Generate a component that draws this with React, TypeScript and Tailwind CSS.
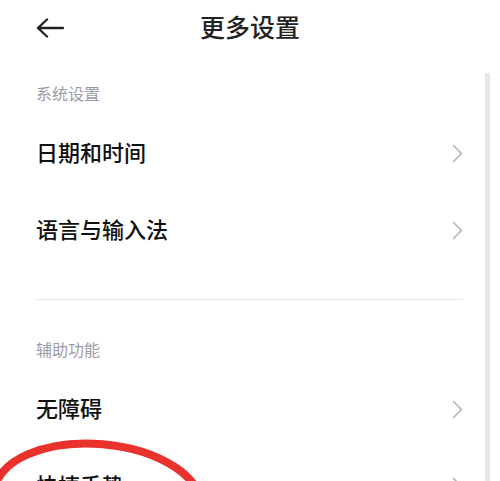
const font = { fontFamily: '"Noto Sans CJK SC", "Noto Sans", sans-serif' };

function BackArrow() {
  return (
    <svg width="28" height="20" viewBox="0 0 28 20" fill="none">
      <path d="M2 10H27M11 1.5L2 10L11 18.5" stroke="#222222" strokeWidth="2.4" strokeLinecap="round" strokeLinejoin="round" />
    </svg>
  );
}

function Chevron() {
  return (
    <svg width="11" height="19" viewBox="0 0 11 19" fill="none">
      <path d="M1.5 1.5L9.5 9.5L1.5 17.5" stroke="#b4b4b8" strokeWidth="1.6" strokeLinecap="round" strokeLinejoin="round" />
    </svg>
  );
}

function SectionTitle({ label }: { label: string }) {
  return <div className="flex h-[40px] items-center pb-[4px] text-[16px] text-[#9b9ba6]">{label}</div>;
}

function Row({ label }: { label: string }) {
  return (
    <div className="flex h-[77px] items-center justify-between">
      <span className="pb-[5px] text-[22px] font-medium text-[#111111]">{label}</span>
      <Chevron />
    </div>
  );
}

export default function App() {
  return (
    <div className="relative h-[481px] w-[500px] overflow-hidden bg-white" style={font}>
      <header className="relative flex h-[56px] items-center px-[36px]">
        <BackArrow />
        <h1 className="absolute left-0 right-0 pb-[2px] text-center text-[25px] font-medium text-[#222222]">更多设置</h1>
      </header>

      <div className="pl-[36px] pr-[37px]">
        <div className="mt-[19px]">
          <SectionTitle label="系统设置" />
          <Row label="日期和时间" />
          <Row label="语言与输入法" />
        </div>
        <div className="mt-[30px] h-px bg-[#e8e8e8]" />
        <div className="mt-[31px]">
          <SectionTitle label="辅助功能" />
          <Row label="无障碍" />
          <Row label="快捷手势" />
        </div>
      </div>

      <div className="absolute bottom-0 right-[10px] top-[73px] w-[5px] bg-[#e7e7e7]" />

      <svg className="pointer-events-none absolute left-0 top-[420px]" width="260" height="61" viewBox="0 420 260 61">
        <ellipse cx="98" cy="500" rx="104" ry="56" transform="rotate(5 98 500)" fill="none" stroke="#e8322b" strokeWidth="8" />
      </svg>
    </div>
  );
}
